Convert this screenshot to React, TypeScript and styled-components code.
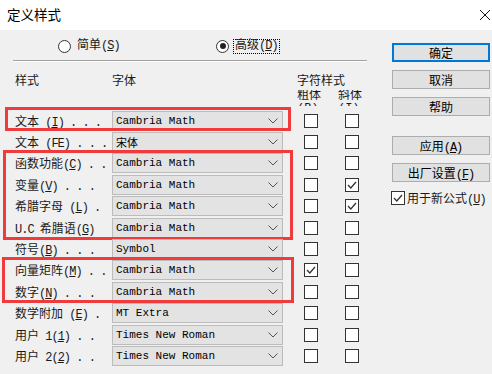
import React from 'react';
import styled, { createGlobalStyle } from 'styled-components';

const GlobalStyle = createGlobalStyle`
  html, body {
    margin: 0;
    padding: 0;
  }
  body {
    width: 492px;
    height: 374px;
    overflow: hidden;
    background: #f0f0f0;
    font-family: "Liberation Mono", "Noto Sans CJK SC", monospace;
    font-size: 12px;
    color: #1a1a1a;
  }
`;

const Window = styled.div`
  width: 492px;
  height: 374px;
  display: flex;
  flex-direction: column;
  background: #f0f0f0;
`;

const TitleBar = styled.div`
  height: 30px;
  flex: none;
  background: #fff;
  display: flex;
  align-items: center;
  justify-content: space-between;
  padding: 0 2px 0 7px;
`;

const Title = styled.span`
  font-family: "Noto Sans CJK SC", sans-serif;
  font-size: 13.5px;
  line-height: 1;
  color: #000;
`;

const Body = styled.div`
  display: flex;
  flex: 1;
`;

const LeftPane = styled.div`
  width: 370px;
  padding-top: 8px;
`;

const RightPane = styled.div`
  width: 98px;
  margin-left: 22px;
  padding-top: 13px;
  display: flex;
  flex-direction: column;
`;

const RadioRow = styled.div`
  height: 16px;
  display: grid;
  grid-template-columns: 158px auto;
  align-items: center;
  padding-left: 58px;
`;

const RadioOption = styled.label`
  display: flex;
  align-items: center;
  gap: 4px;
  white-space: pre;
`;

const RadioCircle = styled.span<{ $on?: boolean }>`
  width: 13px;
  height: 13px;
  box-sizing: border-box;
  border: 1px solid #333;
  border-radius: 50%;
  background: #fff;
  display: flex;
  align-items: center;
  justify-content: center;
  &::after {
    content: '';
    width: 6px;
    height: 6px;
    border-radius: 50%;
    background: ${(p) => (p.$on ? '#222' : 'transparent')};
  }
`;

const FocusText = styled.span<{ $focus?: boolean }>`
  line-height: 13px;
  padding: 0 1px;
  border: 1px dotted ${(p) => (p.$focus ? '#000' : 'transparent')};
`;

const Separator = styled.div`
  margin: 6px 0 0 13px;
  width: 354px;
  border-top: 1px solid #a0a0a0;
  border-bottom: 1px solid #fff;
`;

const Table = styled.div`
  padding-left: 15px;
  margin-top: 12px;
`;

const GridRow = styled.div<{ $h: number }>`
  display: grid;
  grid-template-columns: 97px 171px 14px 28px 13px 28px;
  align-items: center;
  height: ${(p) => p.$h}px;
`;

const HeadText = styled.span<{ $col?: string }>`
  grid-column: ${(p) => p.$col || 'auto'};
  white-space: nowrap;
  line-height: 16px;
`;

const SubHead = styled.span<{ $col: number }>`
  grid-column: ${(p) => p.$col};
  align-self: start;
  height: 16px;
  overflow: hidden;
  line-height: 13px;
  white-space: pre;
`;

const Group = styled.div<{ $mark?: [number, number, number, number] }>`
  position: relative;
  &::after {
    content: '';
    display: ${(p) => (p.$mark ? 'block' : 'none')};
    position: absolute;
    left: ${(p) => (p.$mark ? p.$mark[0] : 0)}px;
    width: ${(p) => (p.$mark ? p.$mark[1] : 0)}px;
    top: ${(p) => (p.$mark ? p.$mark[2] : 0)}px;
    bottom: ${(p) => (p.$mark ? p.$mark[3] : 0)}px;
    box-sizing: border-box;
    border: 3px solid #ef3b3b;
    pointer-events: none;
  }
`;

const Label = styled.span`
  white-space: pre;
  overflow: hidden;
`;

const Latin = styled.span`
  letter-spacing: -1px;
`;

const Combo = styled.div`
  height: 20px;
  box-sizing: border-box;
  border: 1px solid #bcbcbc;
  background: #e3e3e3;
  display: flex;
  align-items: center;
  justify-content: space-between;
  padding: 0 4px 0 3px;
  font-size: 11px;
  color: #000;
`;

const Box = styled.span`
  width: 14px;
  height: 14px;
  box-sizing: border-box;
  border: 1px solid #333;
  background: #fff;
  display: flex;
  align-items: center;
  justify-content: center;
  justify-self: center;
  flex: none;
`;

const Button = styled.div<{ $primary?: boolean; $gap?: number }>`
  height: 19px;
  box-sizing: border-box;
  margin-bottom: ${(p) => p.$gap ?? 8}px;
  border: ${(p) => (p.$primary ? '2px solid #0078d7' : '1px solid #adadad')};
  background: #e1e1e1;
  display: flex;
  align-items: center;
  justify-content: center;
  white-space: pre;
  color: #000;
`;

const CheckLine = styled.label`
  display: flex;
  align-items: center;
  gap: 2px;
  margin-top: 7px;
  margin-left: -1px;
  white-space: pre;
`;

// "_X" marks an underlined access key; runs of Latin text are set tighter, as the dialog's font does
const Txt = ({ s }: { s: string }) => {
  const parts = s.match(/_.|[\u4e00-\u9fff]+|[^_\u4e00-\u9fff]+/g) || [];
  return (
    <span>
      {parts.map((p, i) =>
        p[0] === '_' ? (
          <Latin key={i}>
            <u>{p[1]}</u>
          </Latin>
        ) : /[\u4e00-\u9fff]/.test(p) ? (
          <span key={i}>{p}</span>
        ) : (
          <Latin key={i}>{p}</Latin>
        )
      )}
    </span>
  );
};

const Check = ({ on }: { on?: boolean }) => (
  <Box>
    {on && (
      <svg width="10" height="10" viewBox="0 0 10 10">
        <polyline points="1,5 3.8,8 9,2" fill="none" stroke="#333" strokeWidth="1.3" />
      </svg>
    )}
  </Box>
);

const Chevron = () => (
  <svg width="10" height="6" viewBox="0 0 10 6">
    <polyline points="0.5,0.5 5,5 9.5,0.5" fill="none" stroke="#555" strokeWidth="1" />
  </svg>
);

type Item = { label: string; font: string; b?: boolean; i?: boolean };

const rows: Item[] = [
  { label: '文本 (_I) . . .', font: 'Cambria Math' },
  { label: '文本 (FE) . . .', font: '宋体' },
  { label: '函数功能(_C) . .', font: 'Cambria Math' },
  { label: '变量(_V) . . .', font: 'Cambria Math', i: true },
  { label: '希腊字母 (_L) .', font: 'Cambria Math', i: true },
  { label: 'U.C 希腊语(_G)', font: 'Cambria Math' },
  { label: '符号(_B) . . .', font: 'Symbol' },
  { label: '向量矩阵(_M) . .', font: 'Cambria Math', b: true },
  { label: '数字(_N) . . .', font: 'Cambria Math' },
  { label: '数学附加 (_E) .', font: 'MT Extra' },
  { label: '用户 1(_1) . .', font: 'Times New Roman' },
  { label: '用户 2(_2) . .', font: 'Times New Roman' },
];

const groups: { from: number; to: number; mark?: [number, number, number, number] }[] = [
  { from: 0, to: 1, mark: [-10, 286, -3, 0] },
  { from: 1, to: 2 },
  { from: 2, to: 6, mark: [-12, 290, -3, -2] },
  { from: 6, to: 7 },
  { from: 7, to: 9, mark: [-13, 292, -3, 0] },
  { from: 9, to: 12 },
];

const StyleRow = ({ r }: { r: Item }) => (
  <GridRow $h={21.4}>
    <Label>
      <Txt s={r.label} />
    </Label>
    <Combo>
      <span>{r.font}</span>
      <Chevron />
    </Combo>
    <span />
    <Check on={r.b} />
    <span />
    <Check on={r.i} />
  </GridRow>
);

export default function App() {
  return (
    <Window>
      <GlobalStyle />
      <TitleBar>
        <Title>定义样式</Title>
        <svg width="10" height="10" viewBox="0 0 10 10">
          <path d="M0 0L10 10M10 0L0 10" stroke="#111" strokeWidth="1" />
        </svg>
      </TitleBar>
      <Body>
        <LeftPane>
          <RadioRow>
            <RadioOption>
              <RadioCircle />
              <FocusText>
                <Txt s="简单(_S)" />
              </FocusText>
            </RadioOption>
            <RadioOption>
              <RadioCircle $on />
              <FocusText $focus>
                <Txt s="高级(_D)" />
              </FocusText>
            </RadioOption>
          </RadioRow>
          <Separator />
          <Table>
            <GridRow $h={16}>
              <HeadText>样式</HeadText>
              <HeadText>字体</HeadText>
              <HeadText $col="4 / 7">字符样式</HeadText>
            </GridRow>
            <GridRow $h={20}>
              <SubHead $col={4}>{'粗体\n(B)'}</SubHead>
              <SubHead $col={6}>{'斜体\n(I)'}</SubHead>
            </GridRow>
            {groups.map((g) => (
              <Group key={g.from} $mark={g.mark}>
                {rows.slice(g.from, g.to).map((r, i) => (
                  <StyleRow key={i} r={r} />
                ))}
              </Group>
            ))}
          </Table>
        </LeftPane>
        <RightPane>
          <Button $primary>确定</Button>
          <Button>取消</Button>
          <Button $gap={20}>帮助</Button>
          <Button>
            <Txt s="应用(_A)" />
          </Button>
          <Button $gap={0}>
            <Txt s="出厂设置(_F)" />
          </Button>
          <CheckLine>
            <Check on />
            <Txt s="用于新公式(_U)" />
          </CheckLine>
        </RightPane>
      </Body>
    </Window>
  );
}
